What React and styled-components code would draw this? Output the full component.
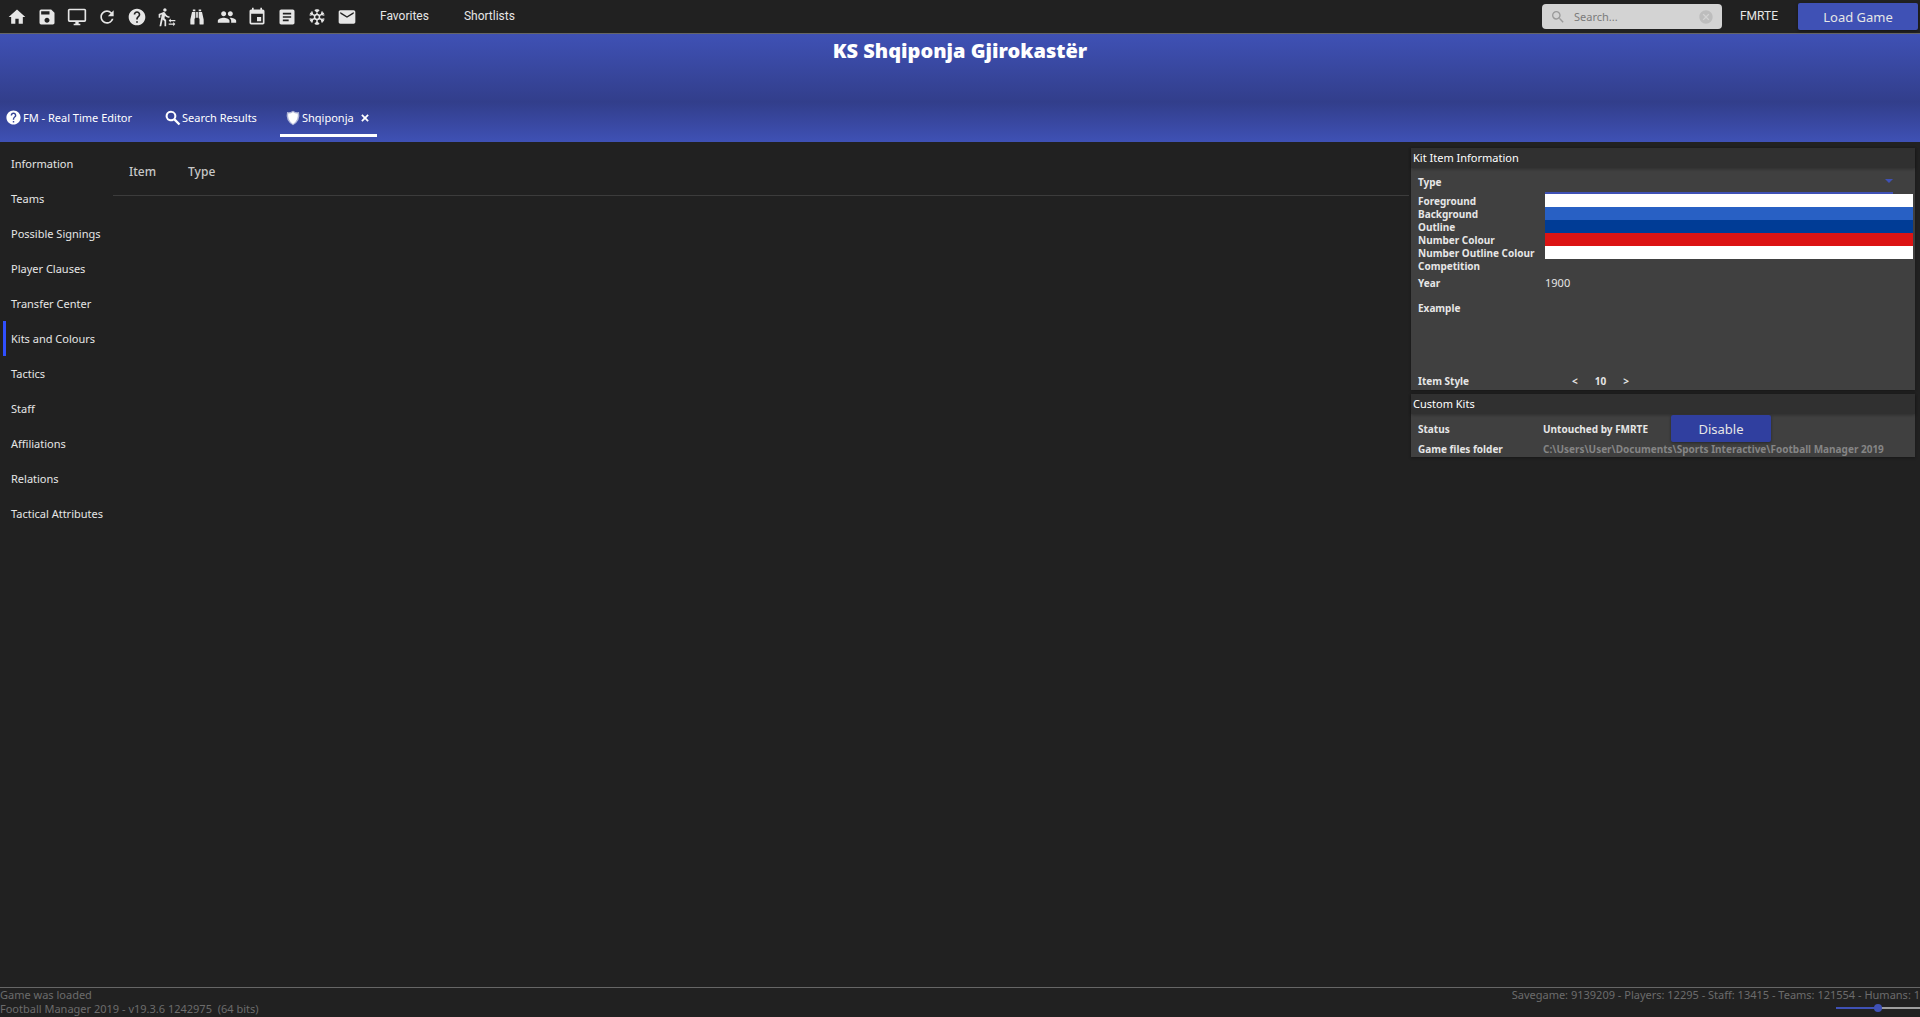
import React from "react";
import styled, { createGlobalStyle } from "styled-components";
import {
  MdArticle,
  MdCancel,
  MdEmail,
  MdEvent,
  MdHelp,
  MdHome,
  MdPeople,
  MdRefresh,
  MdSave,
  MdSearch,
  MdTransferWithinAStation,
} from "react-icons/md";

const dark = "#212121";
const indigo = "#3f51b5";
const light = "#e6e6e6";

const GlobalStyle = createGlobalStyle`
  * {
    box-sizing: border-box;
  }
  body {
    margin: 0;
    background: ${dark};
    color: ${light};
    font-family: "Noto Sans", "Open Sans", sans-serif;
    font-size: 11px;
    line-height: 16px;
  }
  button, input, select {
    font: inherit;
    color: inherit;
    border: 0;
    padding: 0;
    background: none;
  }
`;

const Page = styled.div`
  display: flex;
  flex-direction: column;
  min-height: 100vh;
`;

const TopBar = styled.div`
  display: flex;
  align-items: center;
  height: 34px;
  padding: 0 2px 0 7px;
  border-bottom: 1px solid #666;
`;

const Tools = styled.div`
  display: flex;
  gap: 10px;
  flex: 1;
`;

const ToolButton = styled.button`
  display: flex;
  color: ${light};
  svg {
    width: 20px;
    height: 20px;
  }
`;

const Menu = styled.nav`
  display: flex;
  gap: 35px;
  margin-left: 13px;
`;

const MenuButton = styled.button`
  padding-bottom: 2px;
  font-family: Roboto, sans-serif;
  font-size: 12px;
  line-height: 16px;
  color: ${light};
`;

const SearchBox = styled.label`
  display: flex;
  align-items: center;
  width: 180px;
  height: 25px;
  padding: 0 8px;
  border-radius: 4px;
  background: #d3d3d3;
  color: #9a9a9a;
  svg {
    width: 16px;
    height: 16px;
  }
`;

const SearchInput = styled.input`
  flex: 1;
  min-width: 0;
  margin-left: 8px;
  outline: none;
  &::placeholder {
    color: #7b7b7b;
    opacity: 1;
  }
`;

const ClearButton = styled.button`
  display: flex;
  color: #bdbdbd;
`;

const UserButton = styled(MenuButton)`
  margin: 0 20px 0 18px;
`;

const ActionButton = styled.button`
  width: ${(props) => props.$width};
  height: 27px;
  border-radius: 2px;
  background: ${(props) => props.$color};
  color: ${light};
  font-size: 13px;
  box-shadow: 0 1px 3px rgba(0, 0, 0, 0.4);
`;

const Header = styled.header`
  display: flex;
  flex-direction: column;
  justify-content: space-between;
  height: 108px;
  background: linear-gradient(${indigo}, #323e8b 63%, ${indigo});
`;

const Title = styled.h1`
  margin: 4px 0 0;
  text-align: center;
  font-size: 20px;
  line-height: 26px;
  font-weight: 900;
  color: #fff;
`;

const Tabs = styled.nav`
  display: flex;
  gap: 14px;
  padding-bottom: 5px;
`;

const Tab = styled.button`
  display: flex;
  align-items: center;
  gap: 1px;
  min-width: ${(props) => props.$width};
  height: 36px;
  padding: 0 7px 0 5px;
  border-bottom: 3px solid ${(props) => (props.$active ? "#fff" : "transparent")};
  color: #fff;
`;

const TabText = styled.span`
  flex: 1;
  text-align: left;
  white-space: nowrap;
`;

const Main = styled.main`
  display: flex;
  flex: 1;
`;

const Sidebar = styled.nav`
  display: flex;
  flex-direction: column;
  width: 110px;
  margin: 4px 0 0 3px;
`;

const SideLink = styled.a`
  height: 35px;
  padding-left: 5px;
  border-left: 3px solid ${(props) => (props.$active ? "#304ffe" : "transparent")};
  line-height: 35px;
  color: ${light};
  text-decoration: none;
  white-space: nowrap;
`;

const ItemsArea = styled.section`
  flex: 1;
`;

const ItemsTable = styled.table`
  width: 100%;
  border-collapse: collapse;
  th {
    height: 53px;
    padding: 8px 16px 0;
    border-bottom: 1px solid #3c3c3c;
    text-align: left;
    font-size: 12px;
    font-weight: 500;
    color: #c8c8c8;
  }
  th:last-child {
    width: 100%;
  }
`;

const Panels = styled.aside`
  display: flex;
  flex-direction: column;
  gap: 4px;
  width: 504px;
  margin: 6px 5px 0 2px;
`;

const Panel = styled.section`
  background: #404040;
  box-shadow: 0 1px 3px rgba(0, 0, 0, 0.3);
`;

const PanelTitle = styled.h2`
  margin: 0;
  padding: 0 2px;
  background: #303030;
  box-shadow: 0 1px 3px rgba(0, 0, 0, 0.3);
  font-size: 11px;
  line-height: 20px;
  font-weight: 400;
  color: #fff;
`;

const Row = styled.div`
  display: grid;
  grid-template-columns: 127px 1fr;
  grid-template-rows: 100%;
  align-items: ${(props) => props.$align || "center"};
  height: ${(props) => props.$height || "13px"};
  padding: 0 2px 0 7px;
`;

const Label = styled.label`
  padding-top: ${(props) => (props.$flush ? "0" : "2px")};
  font-size: 10px;
  line-height: 13px;
  font-weight: 700;
  white-space: nowrap;
`;

const TypeField = styled.div`
  display: flex;
  align-items: center;
  height: 100%;
  margin-right: 20px;
  border-bottom: 2px solid ${indigo};
  color: ${indigo};
  svg {
    margin-top: 2px;
  }
`;

const TypeSelect = styled.select`
  flex: 1;
  appearance: none;
  outline: none;
`;

const Swatch = styled.button`
  height: 13px;
  background: ${(props) => props.$color};
`;

const YearInput = styled.input`
  font-size: 11px;
`;

const Stepper = styled.div`
  display: flex;
  align-items: center;
  gap: 17px;
  padding-left: 27px;
  font-size: 10px;
  font-weight: 700;
`;

const Status = styled.div`
  display: flex;
  align-items: center;
  gap: 23px;
  margin-left: -2px;
`;

const FolderPath = styled(Label).attrs({ as: "span" })`
  margin-left: -2px;
  color: #858585;
`;

const Footer = styled.footer`
  display: flex;
  justify-content: space-between;
  height: 30px;
  border-top: 1px solid #666;
  line-height: 14px;
  color: #6c6c6c;
`;

const FooterRight = styled.div`
  display: flex;
  flex-direction: column;
  align-items: flex-end;
`;

const Zoom = styled.input`
  width: 84px;
  height: 8px;
  margin: 2px 0 0;
  appearance: none;
  background: linear-gradient(${indigo}, ${indigo}) 0 50% / 50% 2px no-repeat,
    linear-gradient(#9e9e9e, #9e9e9e) 0 50% / 100% 2px no-repeat;
  &::-webkit-slider-thumb {
    appearance: none;
    width: 8px;
    height: 8px;
    border-radius: 50%;
    background: ${indigo};
  }
`;

const Icon = ({ d, size = 20 }) => (
  <svg viewBox="0 0 24 24" width={size} height={size} fill="currentColor" aria-hidden="true">
    <path d={d} />
  </svg>
);

const paths = {
  monitor:
    "M21,16H3V4H21M21,2H3C1.89,2 1,2.89 1,4V16A2,2 0 0,0 3,18H10V20H8V22H16V20H14V18H21A2,2 0 0,0 23,16V4C23,2.89 22.1,2 21,2Z",
  binoculars:
    "M11,6H13V13H11V6M9,20A1,1 0 0,1 8,21H5A1,1 0 0,1 4,20V15L6,6H10V13A1,1 0 0,1 9,14V20M10,5H7V3H10V5M15,20V14A1,1 0 0,1 14,13V6H18L20,15V20A1,1 0 0,1 19,21H16A1,1 0 0,1 15,20M14,5V3H17V5H14Z",
  search:
    "M9,1A8,8 0 0,1 15.7,13.3L23,20.5L20.5,23L13.3,15.7A8,8 0 1,1 9,1M9,4A5,5 0 1,0 9,14A5,5 0 1,0 9,4Z",
  close: "M6,3L12,9L18,3L21,6L15,12L21,18L18,21L12,15L6,21L3,18L9,12L3,6Z",
};

const Snowflake = () => (
  <svg viewBox="0 0 24 24" fill="none" stroke="currentColor" strokeWidth="1.8" aria-hidden="true">
    {[0, 60, 120, 180, 240, 300].map((angle) => (
      <path key={angle} d="M12 9.5V2.5M9.5 3.2L12 5.8L14.5 3.2" transform={`rotate(${angle} 12 12)`} />
    ))}
    <circle cx="12" cy="12" r="3" />
  </svg>
);

const Shield = () => (
  <svg viewBox="0 0 24 24" width="16" height="16" fill="currentColor" aria-hidden="true">
    <path d="M12 1Q17 4 21 3Q24 16 12 23Q0 16 3 3Q7 4 12 1Z" opacity="0.6" />
    <path d="M12 3Q16 6 19 5Q21 15 12 21Q3 15 5 5Q8 6 12 3Z" />
  </svg>
);

const tools = [
  ["Home", <MdHome />],
  ["Save", <MdSave />],
  ["Monitor", <Icon d={paths.monitor} />],
  ["Refresh", <MdRefresh />],
  ["Help", <MdHelp />],
  ["Transfers", <MdTransferWithinAStation />],
  ["Scout", <Icon d={paths.binoculars} />],
  ["People", <MdPeople />],
  ["Calendar", <MdEvent />],
  ["Notes", <MdArticle />],
  ["Freeze", <Snowflake />],
  ["Mail", <MdEmail />],
];

const sections = [
  "Information",
  "Teams",
  "Possible Signings",
  "Player Clauses",
  "Transfer Center",
  "Kits and Colours",
  "Tactics",
  "Staff",
  "Affiliations",
  "Relations",
  "Tactical Attributes",
];

const colours = [
  ["Foreground", "#ffffff"],
  ["Background", "#2860c4"],
  ["Outline", "#003c96"],
  ["Number Colour", "#dc1414"],
  ["Number Outline Colour", "#ffffff"],
];

export default function App() {
  return (
    <Page>
      <GlobalStyle />
      <TopBar>
        <Tools>
          {tools.map(([name, icon]) => (
            <ToolButton key={name} aria-label={name}>
              {icon}
            </ToolButton>
          ))}
          <Menu>
            <MenuButton>Favorites</MenuButton>
            <MenuButton>Shortlists</MenuButton>
          </Menu>
        </Tools>
        <SearchBox>
          <MdSearch />
          <SearchInput placeholder="Search..." aria-label="Search" />
          <ClearButton aria-label="Clear">
            <MdCancel />
          </ClearButton>
        </SearchBox>
        <UserButton>FMRTE</UserButton>
        <ActionButton $width="120px" $color={indigo}>
          Load Game
        </ActionButton>
      </TopBar>
      <Header>
        <Title>KS Shqiponja Gjirokastër</Title>
        <Tabs>
          <Tab $width="146px">
            <MdHelp size={17} />
            <TabText>FM - Real Time Editor</TabText>
          </Tab>
          <Tab $width="106px">
            <Icon d={paths.search} size={16} />
            <TabText>Search Results</TabText>
          </Tab>
          <Tab $width="97px" $active>
            <Shield />
            <TabText>Shqiponja</TabText>
            <Icon d={paths.close} size={10} />
          </Tab>
        </Tabs>
      </Header>
      <Main>
        <Sidebar>
          {sections.map((name) => (
            <SideLink key={name} href="#" $active={name === "Kits and Colours"}>
              {name}
            </SideLink>
          ))}
        </Sidebar>
        <ItemsArea>
          <ItemsTable>
            <thead>
              <tr>
                <th>Item</th>
                <th>Type</th>
              </tr>
            </thead>
          </ItemsTable>
        </ItemsArea>
        <Panels>
          <Panel>
            <PanelTitle>Kit Item Information</PanelTitle>
            <Row $height="26px">
              <Label htmlFor="type">Type</Label>
              <TypeField>
                <TypeSelect id="type" />
                <svg width="8" height="4" viewBox="0 0 8 4" fill="currentColor" aria-hidden="true">
                  <path d="M0 0H8L4 4Z" />
                </svg>
              </TypeField>
            </Row>
            {colours.map(([name, color]) => (
              <Row key={name}>
                <Label htmlFor={name}>{name}</Label>
                <Swatch id={name} $color={color} />
              </Row>
            ))}
            <Row>
              <Label as="span">Competition</Label>
            </Row>
            <Row $height="22px">
              <Label htmlFor="year" $flush>
                Year
              </Label>
              <YearInput id="year" defaultValue="1900" />
            </Row>
            <Row $height="28px">
              <Label as="span" $flush>
                Example
              </Label>
            </Row>
            <Row $height="50px" />
            <Row $height="18px">
              <Label as="span" $flush>
                Item Style
              </Label>
              <Stepper>
                <button aria-label="Previous">&lt;</button>
                <span>10</span>
                <button aria-label="Next">&gt;</button>
              </Stepper>
            </Row>
          </Panel>
          <Panel>
            <PanelTitle>Custom Kits</PanelTitle>
            <Row $height="29px">
              <Label as="span">Status</Label>
              <Status>
                <Label as="span">Untouched by FMRTE</Label>
                <ActionButton $width="100px" $color="#303f9f">
                  Disable
                </ActionButton>
              </Status>
            </Row>
            <Row $height="14px" $align="start">
              <Label as="span" $flush>
                Game files folder
              </Label>
              <FolderPath $flush>
                C:\Users\User\Documents\Sports Interactive\Football Manager 2019
              </FolderPath>
            </Row>
          </Panel>
        </Panels>
      </Main>
      <Footer>
        <div>
          <div>Game was loaded</div>
          <div>Football Manager 2019 - v19.3.6 1242975&nbsp; (64 bits)</div>
        </div>
        <FooterRight>
          <span>Savegame: 9139209 - Players: 12295 - Staff: 13415 - Teams: 121554 - Humans: 1</span>
          <Zoom type="range" aria-label="Zoom" />
        </FooterRight>
      </Footer>
    </Page>
  );
}
